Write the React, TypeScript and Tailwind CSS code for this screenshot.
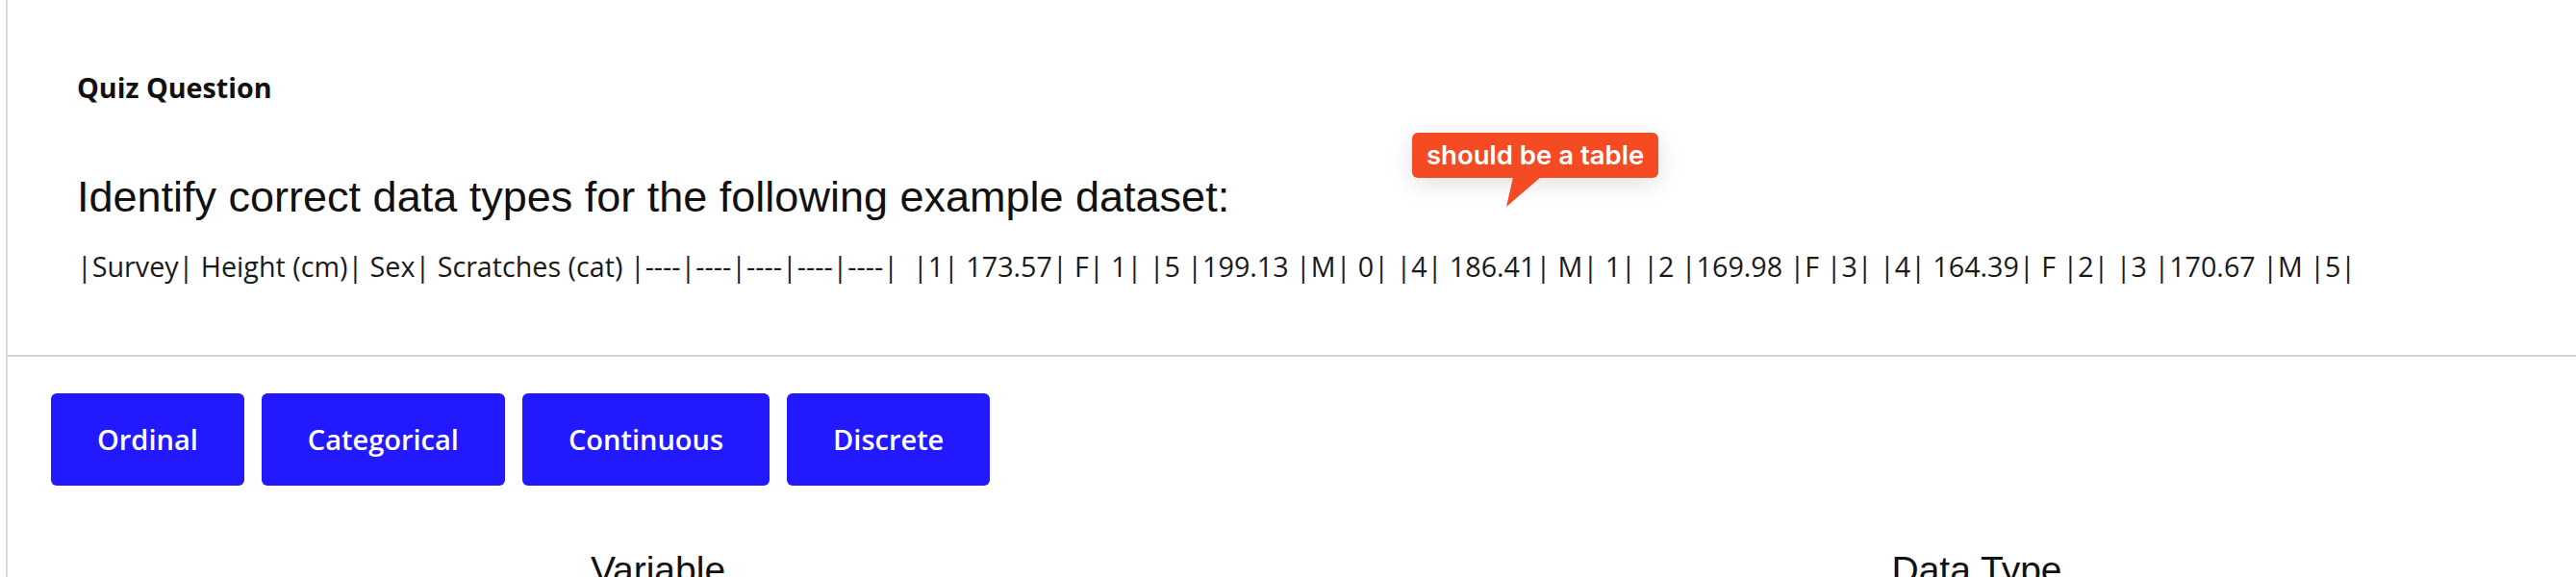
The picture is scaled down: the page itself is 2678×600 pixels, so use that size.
const buttons = ["Ordinal", "Categorical", "Continuous", "Discrete"];

const rowText =
  "|Survey| Height (cm)| Sex| Scratches (cat) |----|----|----|----|----|  |1| 173.57| F| 1| |5 |199.13 |M| 0| |4| 186.41| M| 1| |2 |169.98 |F |3| |4| 164.39| F |2| |3 |170.67 |M |5|";

function Tooltip() {
  return (
    <div className="absolute left-[1460px] top-[138px]">
      <div className="flex h-[47px] items-center rounded-[6px] bg-[#f44b24] px-[15px] text-[27.5px] font-semibold text-white shadow-[0_6px_24px_rgba(0,0,0,0.13)] [font-family:Inter,'Noto_Sans',sans-serif]">
        should be a table
      </div>
      <svg className="absolute left-[95px] top-[46px]" width="40" height="32" viewBox="0 0 40 32">
        <polygon points="10,0 39,0 3,31" fill="#f44b24" />
      </svg>
    </div>
  );
}

export default function App() {
  return (
    <div className="h-[600px] w-[2678px] overflow-hidden bg-white pl-[6px] [font-family:'Open_Sans',sans-serif]">
      <div className="min-h-full border-l-2 border-[#d9d9d9]">
        <section className="relative border-b-2 border-[#d6d6d6] px-[72px] pb-[71px] pt-[70px]">
          <h3 className="text-[28.7px] font-bold leading-[42px] text-[#111]">Quiz Question</h3>
          <h2 className="mt-[67px] text-[45px] leading-[52px] text-[#111] [font-family:'Liberation_Sans',Arial,sans-serif]">
            Identify correct data types for the following example dataset:
          </h2>
          <p className="mt-[25px] whitespace-pre text-[28.7px] leading-[42px] text-[#1a1a1a]">{rowText}</p>
          <Tooltip />
        </section>

        <section className="px-[45px] pt-[38px]">
          <div className="flex gap-[18px]">
            {buttons.map((b) => (
              <button
                key={b}
                className="h-[96px] rounded-[6px] bg-[#2219ff] px-[48px] text-[29px] font-semibold text-white"
              >
                {b}
              </button>
            ))}
          </div>
          <div className="mt-[66px] grid grid-cols-[1262px_1480px] text-[39px] leading-[44px] text-[#111] [font-family:'Liberation_Sans',Arial,sans-serif]">
            <div className="text-center">Variable</div>
            <div className="text-center">Data Type</div>
          </div>
        </section>
      </div>
    </div>
  );
}
